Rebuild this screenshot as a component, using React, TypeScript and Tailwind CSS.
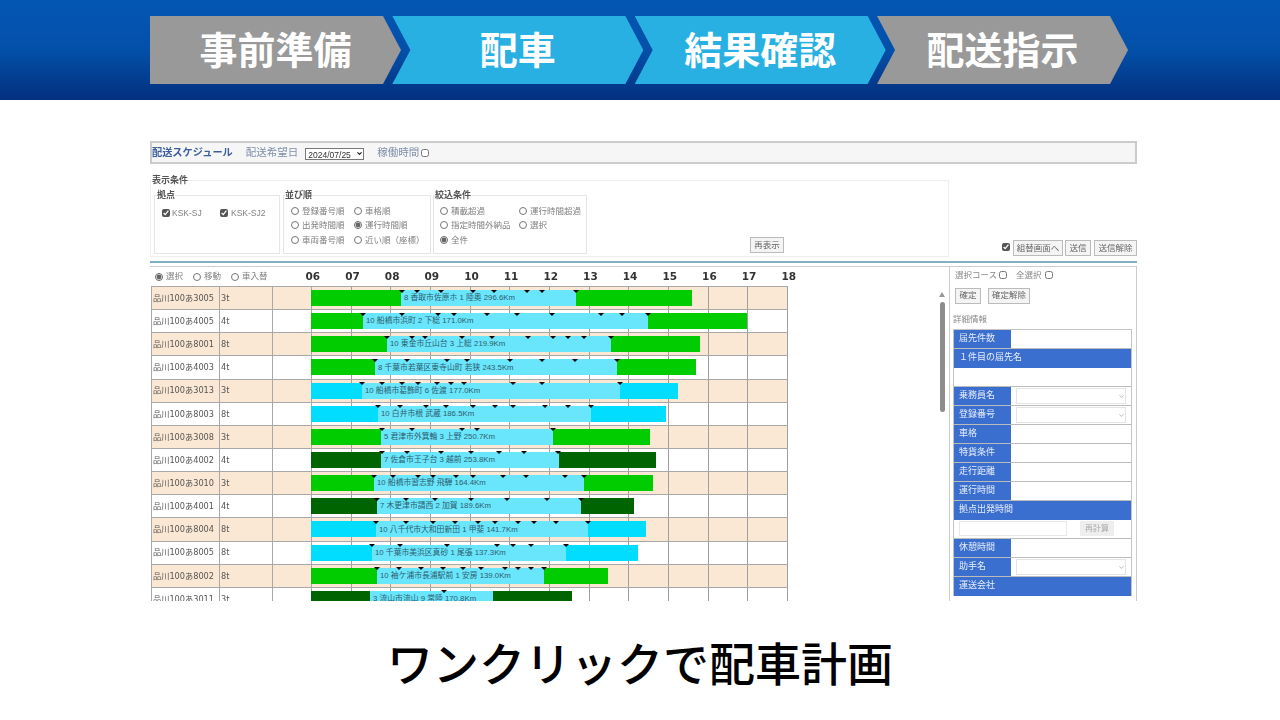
import { ChevronDown } from "lucide-react";

const STEPS = [
  { label: "事前準備", color: "bg-[#999999]" },
  { label: "配車", color: "bg-[#29b0e2]" },
  { label: "結果確認", color: "bg-[#29b0e2]" },
  { label: "配送指示", color: "bg-[#999999]" },
];

const HOURS = ["06", "07", "08", "09", "10", "11", "12", "13", "14", "15", "16", "17", "18"];

const GREEN = "bg-[#00cc00]";
const DARK = "bg-[#006400]";
const CYAN = "bg-[#00ddff]";

// x values are page pixels: a = end of loading bar, b = end of route, c = end of return
const ROWS = [
  { reg: "品川100あ3005", ton: "3t", tone: GREEN, a: 401, b: 576, c: 692, text: "8 香取市佐原ホ 1 陸奥 296.6Km", ticks: [402, 417, 441, 473, 494, 527, 542, 576] },
  { reg: "品川100あ4005", ton: "4t", tone: GREEN, a: 363, b: 648, c: 747, text: "10 船橋市浜町 2 下総 171.0Km", ticks: [363, 402, 438, 454, 487, 517, 552, 601, 622, 648] },
  { reg: "品川100あ8001", ton: "8t", tone: GREEN, a: 387, b: 611, c: 700, text: "10 東金市丘山台 3 上総 219.9Km", ticks: [387, 412, 425, 462, 492, 528, 553, 568, 584, 611] },
  { reg: "品川100あ4003", ton: "4t", tone: GREEN, a: 375, b: 617, c: 696, text: "8 千葉市若葉区東寺山町 若狭 243.5Km", ticks: [375, 407, 447, 467, 510, 542, 575, 617] },
  { reg: "品川100あ3013", ton: "3t", tone: CYAN, a: 362, b: 620, c: 678, text: "10 船橋市葛飾町 6 佐渡 177.0Km", ticks: [362, 382, 402, 418, 437, 451, 464, 513, 542, 620] },
  { reg: "品川100あ8003", ton: "8t", tone: CYAN, a: 378, b: 591, c: 666, text: "10 白井市根 武蔵 186.5Km", ticks: [378, 400, 426, 446, 473, 495, 513, 545, 568, 591] },
  { reg: "品川100あ3008", ton: "3t", tone: GREEN, a: 381, b: 553, c: 650, text: "5 君津市外箕輪 3 上野 250.7Km", ticks: [382, 412, 462, 477, 553] },
  { reg: "品川100あ4002", ton: "4t", tone: DARK, a: 381, b: 559, c: 656, text: "7 佐倉市王子台 3 越前 253.8Km", ticks: [382, 407, 441, 471, 499, 524, 558] },
  { reg: "品川100あ3010", ton: "3t", tone: GREEN, a: 374, b: 584, c: 653, text: "10 船橋市習志野 飛騨 164.4Km", ticks: [374, 393, 418, 433, 456, 473, 503, 526, 565, 584] },
  { reg: "品川100あ4001", ton: "4t", tone: DARK, a: 377, b: 581, c: 634, text: "7 木更津市請西 2 加賀 189.6Km", ticks: [377, 406, 435, 471, 507, 547, 581] },
  { reg: "品川100あ8004", ton: "8t", tone: CYAN, a: 376, b: 588, c: 646, text: "10 八千代市大和田新田 1 甲斐 141.7Km", ticks: [376, 406, 433, 455, 478, 495, 518, 534, 556, 588] },
  { reg: "品川100あ8005", ton: "8t", tone: CYAN, a: 372, b: 566, c: 638, text: "10 千葉市美浜区真砂 1 尾張 137.3Km", ticks: [372, 400, 447, 497, 513, 531, 566] },
  { reg: "品川100あ8002", ton: "8t", tone: GREEN, a: 377, b: 544, c: 608, text: "10 袖ケ浦市長浦駅前 1 安房 139.0Km", ticks: [377, 399, 421, 443, 463, 481, 505, 518, 531, 544] },
  { reg: "品川100あ3011", ton: "3t", tone: DARK, a: 370, b: 493, c: 572, text: "3 流山市流山 9 常陸 170.8Km", ticks: [444] },
];

function Radio({ name, label, checked }: { name: string; label: string; checked?: boolean }) {
  return (
    <label className="flex items-center gap-[3px] whitespace-nowrap">
      <input type="radio" name={name} defaultChecked={checked} className="m-0 h-[8px] w-[8px] accent-[#666666]" />
      <span>{label}</span>
    </label>
  );
}

function Check({ checked }: { checked?: boolean }) {
  return <input type="checkbox" defaultChecked={checked} className="m-0 h-[8px] w-[8px] accent-[#555555]" />;
}

function SmallButton({ label, className }: { label: string; className: string }) {
  return (
    <button className={`flex h-[16px] items-center justify-center border border-[#bbbbbb] bg-[#f4f4f4] text-[8.5px] text-[#666666] ${className}`}>
      {label}
    </button>
  );
}

function DetailRow({ label, select }: { label: string; select?: boolean }) {
  return (
    <div className="flex h-[19px] border-b border-[#bbbbbb]">
      <div className="flex w-[57px] items-center bg-[#3a6fd0] pl-[5px] text-[9px] text-[#e6ecf8]">{label}</div>
      {select ? (
        <div className="relative flex-1 px-[5px] py-[1px]">
          <select className="h-full w-full appearance-none border border-[#e4e4e4] bg-white" />
          <ChevronDown className="absolute right-[6px] top-[6px] h-[7px] w-[7px] text-[#888888]" />
        </div>
      ) : (
        <div className="flex-1 bg-white" />
      )}
    </div>
  );
}

function DetailBand({ label }: { label: string }) {
  return <div className="flex h-[19px] items-center bg-[#3a6fd0] pl-[5px] text-[9px] text-[#e6ecf8]">{label}</div>;
}

function ChartRow({ row, index }: { row: (typeof ROWS)[number]; index: number }) {
  const bg = index % 2 === 0 ? "bg-[#fbe8d4]" : "bg-white";
  return (
    <div className={`flex h-[23.15px] border-b border-[#a8a8a8] text-[#555555] ${bg}`}>
      <div className="flex w-[68px] items-center border-r border-[#a8a8a8] pl-[1px] text-[8.2px] [font-family:'DejaVu_Sans','Noto_Sans_CJK_JP',sans-serif]">
        {row.reg}
      </div>
      <div className="flex w-[53px] items-center border-r border-[#a8a8a8] pl-[1px] text-[8.2px] [font-family:'DejaVu_Sans',sans-serif]">
        {row.ton}
      </div>
      <div className="w-[39px] border-r border-[#a8a8a8]" />
      <div className="relative flex w-[476px]">
        {HOURS.slice(1).map((h) => (
          <div key={h} className="flex-1 border-r border-[#a0a0a0]" />
        ))}
        <div className="absolute left-[-1px] top-[3px] flex h-[16px]">
          <div className={`h-full ${row.tone}`} style={{ width: row.a - 311 }} />
          <div
            className="flex h-full items-center whitespace-nowrap bg-[#6ae6fc] pl-[3px] text-[7.8px] text-[#2c5d6e]"
            style={{ width: row.b - row.a }}
          >
            {row.text}
          </div>
          <div className={`h-full ${row.tone}`} style={{ width: row.c - row.b }} />
        </div>
        {row.ticks.map((x) => (
          <span
            key={x}
            className="absolute top-[2.5px] h-0 w-0 border-x-[3px] border-t-[3px] border-x-transparent border-t-black"
            style={{ left: x - 315 }}
          />
        ))}
      </div>
    </div>
  );
}

export default function App() {
  return (
    <div className="h-[720px] w-[1280px] overflow-hidden bg-white [font-family:'Liberation_Sans','Noto_Sans_CJK_JP',sans-serif]">
      <header className="flex h-[100px] bg-gradient-to-b from-[#0456b4] via-[#0350a9] to-[#03307f] pl-[150px] pt-[16px]">
        {STEPS.map((step, i) => (
          <div
            key={step.label}
            className={
              i === 0
                ? `flex h-[68px] w-[251px] items-center justify-center ${step.color} [clip-path:polygon(0_0,calc(100%-18px)_0,100%_50%,calc(100%-18px)_100%,0_100%)]`
                : `ml-[-8.67px] flex h-[68px] w-[251px] items-center justify-center ${step.color} [clip-path:polygon(0_0,calc(100%-18px)_0,100%_50%,calc(100%-18px)_100%,0_100%,18px_50%)]`
            }
          >
            <span className="mb-[6px] text-[38px] font-bold text-white [font-family:'Noto_Sans_CJK_JP',sans-serif]">{step.label}</span>
          </div>
        ))}
      </header>

      <div className="ml-[150px] mt-[40px] h-[461px] w-[987px] overflow-hidden blur-[0.5px]">
        <div className="mt-[1px] flex h-[23px] items-center border-2 border-[#cccccc] bg-[#f6f6f6] text-[10.5px] text-[#7f90a8]">
          <span className="text-[10.2px] font-bold text-[#3d5f9e]">配送スケジュール</span>
          <span className="ml-[13px]">配送希望日</span>
          <div className="relative ml-[7px] h-[12px] w-[59px]">
            <select className="h-full w-full appearance-none border border-[#777777] bg-white pl-[2px] text-[8.5px] text-[#333333]">
              <option>2024/07/25</option>
            </select>
            <ChevronDown strokeWidth={4} className="absolute right-[1px] top-[3px] h-[7px] w-[7px] text-[#222222]" />
          </div>
          <span className="ml-[13px]">稼働時間</span>
          <span className="ml-[2px] flex">
            <Check />
          </span>
        </div>

        <div className="mt-[11px] flex">
          <fieldset className="flex h-[82px] w-[799px] border border-[#eeeeee] px-[3px] pt-[4px] text-[8.5px] text-[#808080]">
            <legend className="ml-[-2px] text-[9px] font-bold leading-[11px] text-[#555555]">表示条件</legend>
            <fieldset className="h-[64px] w-[126px] border border-[#e6e6e6] pl-[7px]">
              <legend className="ml-[-5px] text-[9px] font-bold leading-[11px] text-[#555555]">拠点</legend>
              <div className="mt-[5.5px] grid grid-cols-[58px_auto]">
                <label className="flex items-center gap-[2px]"><Check checked /> KSK-SJ</label>
                <label className="flex items-center gap-[3px]"><Check checked /> KSK-SJ2</label>
              </div>
            </fieldset>
            <fieldset className="ml-[3px] h-[64px] w-[148px] border border-[#e6e6e6] pl-[7px]">
              <legend className="ml-[-6px] text-[9px] font-bold leading-[11px] text-[#555555]">並び順</legend>
              <div className="mt-[3.5px] grid grid-cols-[63px_auto] gap-y-[1.75px]">
                <Radio name="sort" label="登録番号順" />
                <Radio name="sort" label="車格順" />
                <Radio name="sort" label="出発時間順" />
                <Radio name="sort" label="運行時間順" checked />
                <Radio name="sort" label="車両番号順" />
                <Radio name="sort" label="近い順（座標）" />
              </div>
            </fieldset>
            <fieldset className="ml-[2px] h-[64px] w-[154px] border border-[#e6e6e6] pl-[6px]">
              <legend className="ml-[-5px] text-[9px] font-bold leading-[11px] text-[#555555]">絞込条件</legend>
              <div className="mt-[3.5px] grid grid-cols-[79px_auto] gap-y-[1.75px]">
                <Radio name="filter" label="積載超過" />
                <Radio name="filter" label="運行時間超過" />
                <Radio name="filter" label="指定時間外納品" />
                <Radio name="filter" label="選択" />
                <Radio name="filter" label="全件" checked />
              </div>
            </fieldset>
            <div className="ml-[163px] mt-[47px]">
              <SmallButton label="再表示" className="w-[34px]" />
            </div>
          </fieldset>
          <div className="flex flex-1 items-end justify-end gap-[2px] pb-[1px]">
            <span className="mb-[5px] mr-[1px] flex">
              <Check checked />
            </span>
            <SmallButton label="組替画面へ" className="w-[50px]" />
            <SmallButton label="送信" className="w-[26px]" />
            <SmallButton label="送信解除" className="ml-[1px] w-[43px]" />
          </div>
        </div>

        <div className="mt-[4px] h-[2px] bg-[#7fb0c4]" />

        <div className="mt-[3px] flex border-t border-[#cccccc]">
          <div className="flex w-[799px]">
            <div className="w-[638px]">
              <div className="flex h-[19px] items-center">
                <div className="flex w-[143px] shrink-0 gap-[10px] pl-[5px] text-[8.5px] text-[#808080]">
                  <Radio name="mode" label="選択" checked />
                  <Radio name="mode" label="移動" />
                  <Radio name="mode" label="車入替" />
                </div>
                {HOURS.map((h) => (
                  <div key={h} className="w-[39.67px] shrink-0 text-center text-[10.5px] font-bold text-[#333333] [font-family:'DejaVu_Sans',sans-serif]">
                    {h}
                  </div>
                ))}
              </div>
              <div className="ml-[1px] border-l border-t border-[#a8a8a8]">
                {ROWS.map((row, i) => (
                  <ChartRow key={row.reg} row={row} index={i} />
                ))}
              </div>
            </div>
            <div className="flex-1" />
            <div className="mr-[4px] flex w-[6px] flex-col items-center pt-[25px]">
              <span className="h-0 w-0 border-x-[3px] border-b-[5px] border-x-transparent border-b-[#999999]" />
              <span className="mt-[5px] h-[110px] w-[5px] rounded-full bg-[#8c8c8c]" />
            </div>
          </div>

          <div className="h-[340px] w-[188px] border-x border-[#cccccc] text-[#888888]">
            <div className="flex items-center pl-[5px] pt-[2px] text-[8.5px]">
              <span>選択コース</span>
              <span className="ml-[2px] flex"><Check /></span>
              <span className="ml-[9px]">全選択</span>
              <span className="ml-[3px] flex"><Check /></span>
            </div>
            <div className="mt-[6px] flex gap-[7px] pl-[5px]">
              <SmallButton label="確定" className="w-[26px]" />
              <SmallButton label="確定解除" className="w-[42px]" />
            </div>
            <div className="mt-[9px] pl-[3px] text-[8.5px]">詳細情報</div>
            <div className="ml-[3px] mt-[3px] w-[179px] border-x border-t border-[#c4c4c4]">
              <DetailRow label="届先件数" />
              <DetailBand label="１件目の届先名" />
              <div className="h-[19px] border-b border-[#bbbbbb]" />
              <DetailRow label="乗務員名" select />
              <DetailRow label="登録番号" select />
              <DetailRow label="車格" />
              <DetailRow label="特貨条件" />
              <DetailRow label="走行距離" />
              <DetailRow label="運行時間" />
              <DetailBand label="拠点出発時間" />
              <div className="flex h-[19px] items-center border-b border-[#bbbbbb] pl-[5px]">
                <div className="h-[15px] w-[108px] border border-[#e8e8e8]" />
                <div className="ml-[13px] flex h-[15px] w-[34px] items-center justify-center bg-[#eeeeee] text-[8px] text-[#aaaaaa]">再計算</div>
              </div>
              <DetailRow label="休憩時間" />
              <DetailRow label="助手名" select />
              <DetailBand label="運送会社" />
            </div>
          </div>
        </div>
      </div>

      <div className="mt-[30px] flex justify-center text-[46px] font-medium leading-[60px] text-black [font-family:'Noto_Sans_CJK_JP',sans-serif]">
        ワンクリックで配車計画
      </div>
    </div>
  );
}
